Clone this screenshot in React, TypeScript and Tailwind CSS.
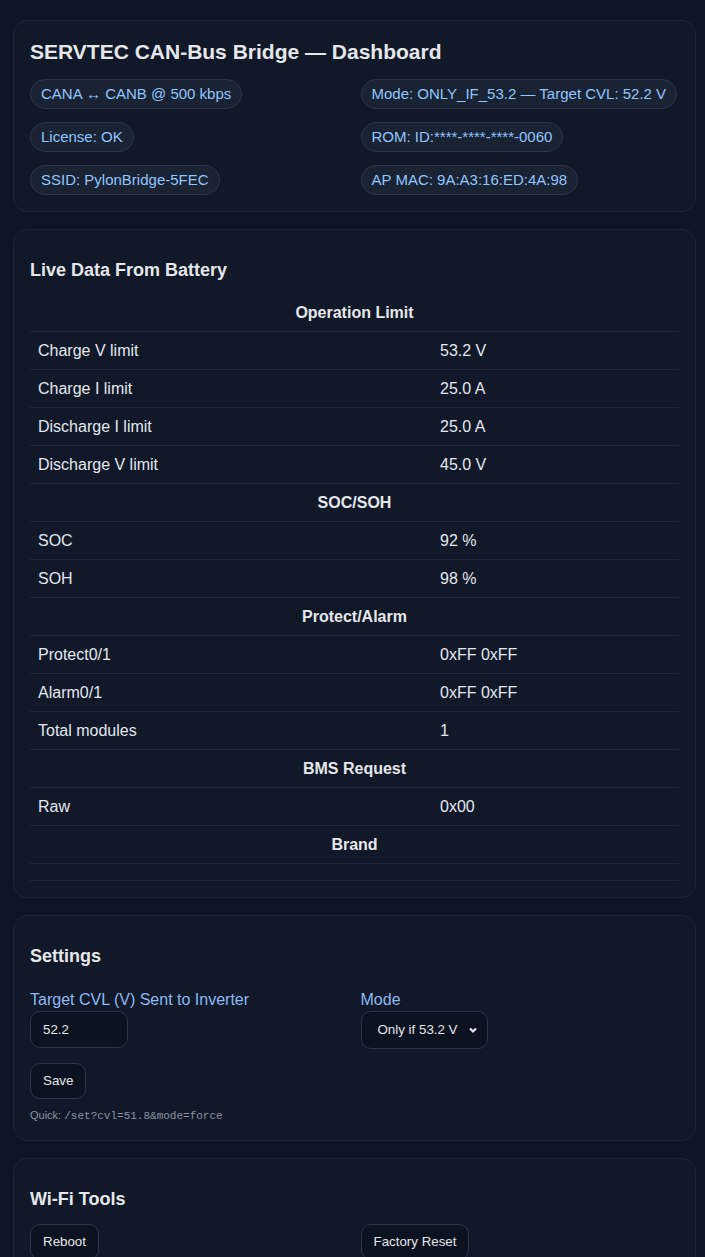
const FONT = "font-['Liberation_Sans',Arial,sans-serif]"

type Row = { kind: 'head'; label: string } | { kind: 'row'; label: string; value: string } | { kind: 'empty' }

const ROWS: Row[] = [
  { kind: 'head', label: 'Operation Limit' },
  { kind: 'row', label: 'Charge V limit', value: '53.2 V' },
  { kind: 'row', label: 'Charge I limit', value: '25.0 A' },
  { kind: 'row', label: 'Discharge I limit', value: '25.0 A' },
  { kind: 'row', label: 'Discharge V limit', value: '45.0 V' },
  { kind: 'head', label: 'SOC/SOH' },
  { kind: 'row', label: 'SOC', value: '92 %' },
  { kind: 'row', label: 'SOH', value: '98 %' },
  { kind: 'head', label: 'Protect/Alarm' },
  { kind: 'row', label: 'Protect0/1', value: '0xFF 0xFF' },
  { kind: 'row', label: 'Alarm0/1', value: '0xFF 0xFF' },
  { kind: 'row', label: 'Total modules', value: '1' },
  { kind: 'head', label: 'BMS Request' },
  { kind: 'row', label: 'Raw', value: '0x00' },
  { kind: 'head', label: 'Brand' },
  { kind: 'empty' },
]

const PILLS = [
  'CANA ↔ CANB @ 500 kbps',
  'Mode: ONLY_IF_53.2 — Target CVL: 52.2 V',
  'License: OK',
  'ROM: ID:****-****-****-0060',
  'SSID: PylonBridge-5FEC',
  'AP MAC: 9A:A3:16:ED:4A:98',
]

function Card({ children }: { children: React.ReactNode }) {
  return <section className="rounded-[14px] border border-[#1e2636] bg-[#111827] p-4">{children}</section>
}

function Pill({ text }: { text: string }) {
  return (
    <span className="inline-block whitespace-nowrap rounded-full border border-[#2c3646] bg-[#1a2333] px-[10px] py-[4px] text-[15px] leading-5 text-[#93c5fd]">
      {text}
    </span>
  )
}

function CardTitle({ children }: { children: React.ReactNode }) {
  return <h2 className="mt-3 text-[18px] font-bold leading-6 text-[#e5e7eb]">{children}</h2>
}

function Btn({ children }: { children: React.ReactNode }) {
  return (
    <button className="h-9 rounded-[10px] border border-[#2c3646] bg-[#0b1220] px-3 text-[13.33px] font-medium text-[#e5e7eb]">
      {children}
    </button>
  )
}

export default function App() {
  return (
    <div className={`min-h-[1257px] bg-[#0e1525] pb-6 pl-[13px] pr-[9px] pt-5 ${FONT}`}>
      <div className="flex flex-col gap-[17px]">
        <Card>
          <h1 className="mb-3 text-[21px] font-bold leading-[30px] text-[#e5e7eb]">SERVTEC CAN-Bus Bridge — Dashboard</h1>
          <div className="grid grid-cols-2 gap-x-3 gap-y-[13px]">
            {PILLS.map((p) => (
              <div key={p}>
                <Pill text={p} />
              </div>
            ))}
          </div>
        </Card>

        <Card>
          <CardTitle>Live Data From Battery</CardTitle>
          <div className="mt-[12px] text-[16px] text-[#e2e8f0]">
            {ROWS.map((r, i) => {
              if (r.kind === 'head')
                return (
                  <div key={i} className="border-b border-[#1f2838] py-2 text-center font-bold leading-[21px] text-[#e5e7eb]">
                    {r.label}
                  </div>
                )
              if (r.kind === 'empty') return <div key={i} className="h-[17px] border-b border-[#1f2838]" />
              return (
                <div key={i} className="grid grid-cols-[402px_1fr] border-b border-[#1f2838] leading-[21px]">
                  <div className="px-2 py-2">{r.label}</div>
                  <div className="px-2 py-2">{r.value}</div>
                </div>
              )
            })}
          </div>
        </Card>

        <Card>
          <CardTitle>Settings</CardTitle>
          <div className="mt-[21px] grid grid-cols-2 gap-x-3">
            <div>
              <label className="block text-[16px] leading-[22px] text-[#8fb8f5]">Target CVL (V) Sent to Inverter</label>
              <div className="flex h-[37px] w-[98px] items-center rounded-[10px] border border-[#2c3646] bg-[#0b1220] px-3 text-[13.33px] text-[#e5e7eb]">
                52.2
              </div>
            </div>
            <div>
              <label className="block text-[16px] leading-[22px] text-[#8fb8f5]">Mode</label>
              <div className="flex h-[38px] w-[127px] items-center justify-between rounded-[10px] border border-[#2c3646] bg-[#0b1220] pl-4 pr-[9px] text-[13.33px] text-[#e5e7eb]">
                <span>Only if 53.2 V</span>
                <svg width="10" height="10" viewBox="0 0 10 10" fill="none" stroke="currentColor" strokeWidth="2.2">
                  <path d="M2 3.5l3 3 3-3" />
                </svg>
              </div>
            </div>
          </div>
          <div className="mt-[14px]">
            <Btn>Save</Btn>
          </div>
          <p className="mt-[8px] text-[11px] leading-4 text-[#8b95a5]">
            Quick: <code className="font-['Liberation_Mono',monospace] text-[11px]">/set?cvl=51.8&amp;mode=force</code>
          </p>
        </Card>

        <Card>
          <CardTitle>Wi-Fi Tools</CardTitle>
          <div className="mt-[13px] grid grid-cols-2 gap-x-3">
            <div>
              <Btn>Reboot</Btn>
            </div>
            <div>
              <Btn>Factory Reset</Btn>
            </div>
          </div>
        </Card>
      </div>
    </div>
  )
}
